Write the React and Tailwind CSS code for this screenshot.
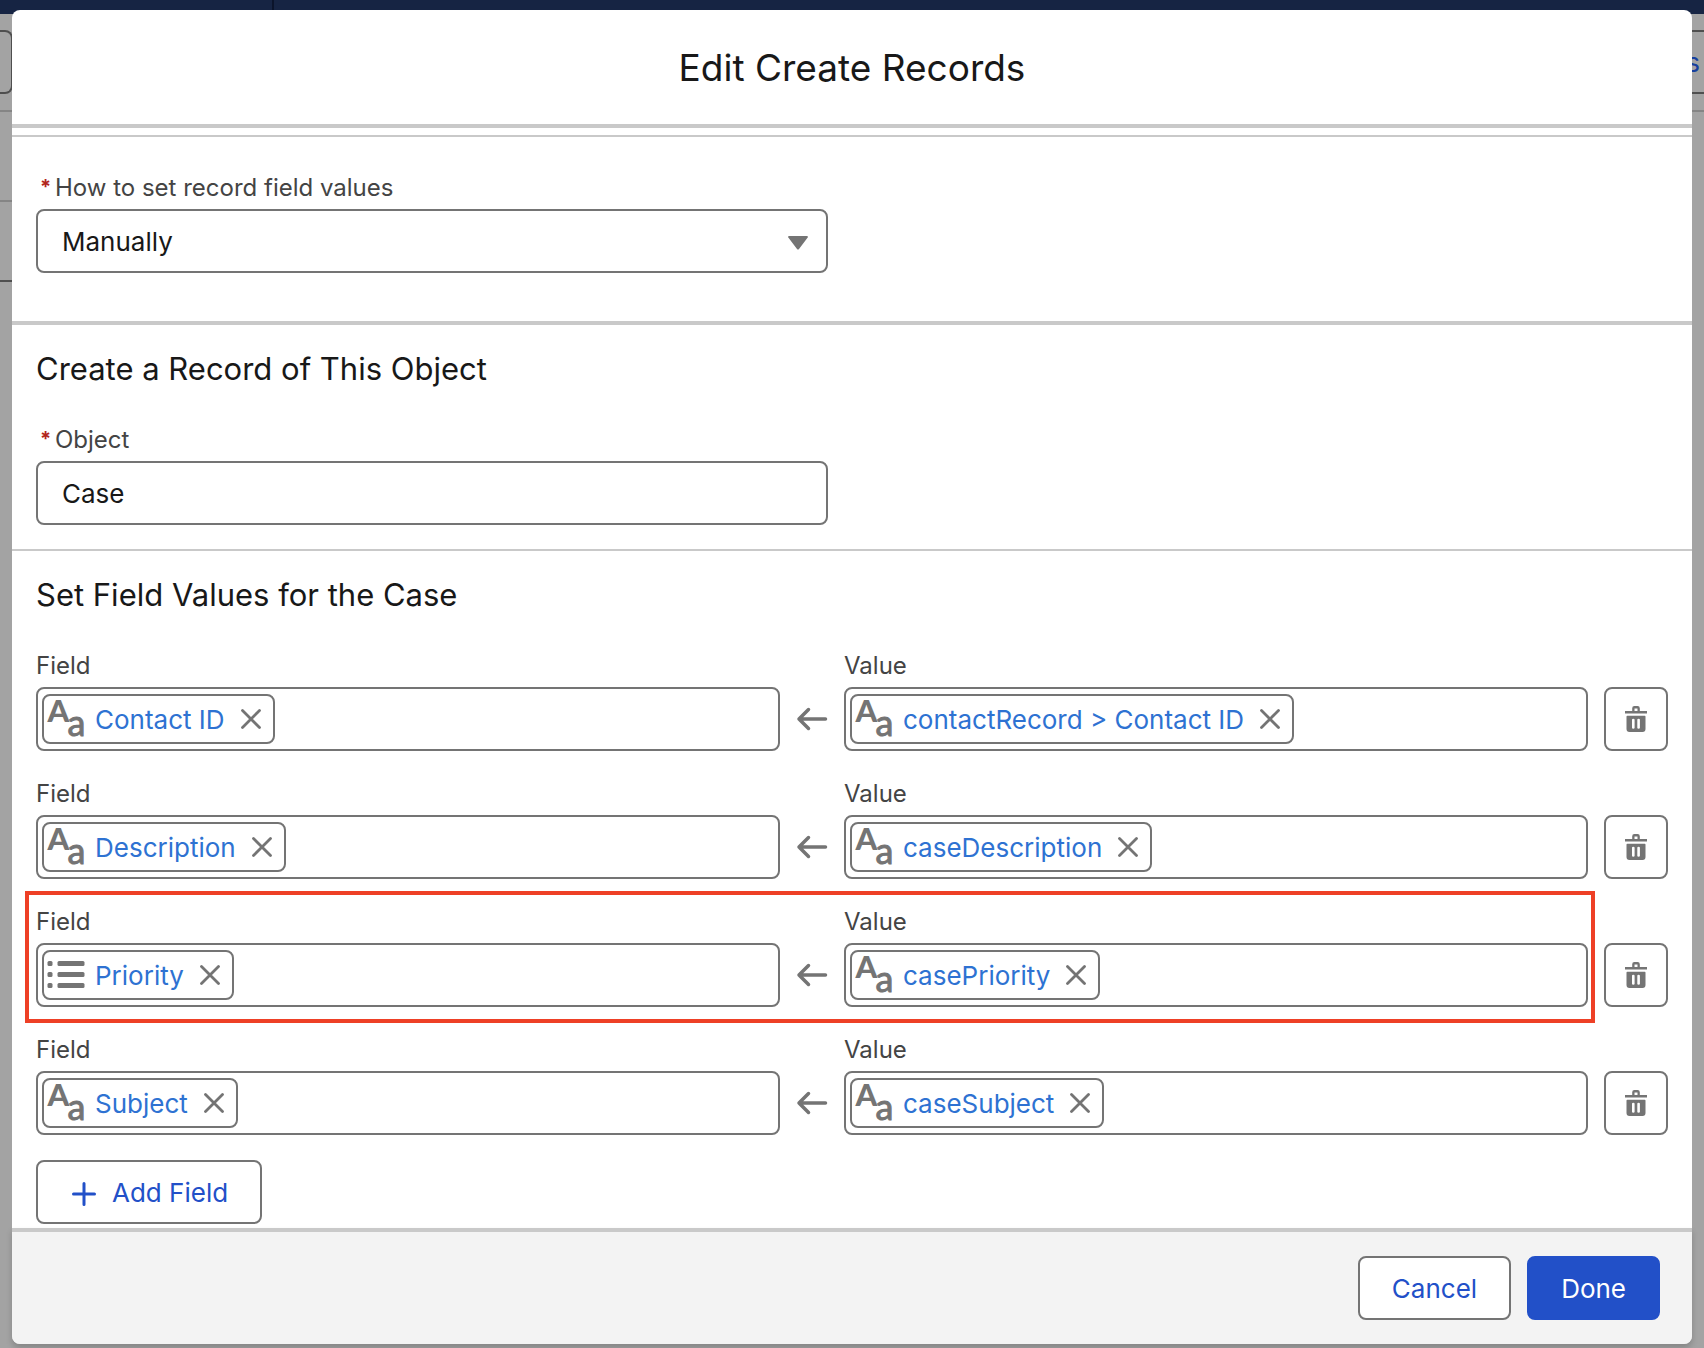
import { useState } from "react";

const ROWS = [
  { id: "contact", field: "Contact ID", type: "text", value: "contactRecord > Contact ID" },
  { id: "description", field: "Description", type: "text", value: "caseDescription" },
  { id: "priority", field: "Priority", type: "picklist", value: "casePriority", highlighted: true },
  { id: "subject", field: "Subject", type: "text", value: "caseSubject" },
];

export default function App() {
  const [rows, setRows] = useState(ROWS);
  const removeRow = (id) => setRows((list) => list.filter((r) => r.id !== id));
  const addRow = () => setRows((list) => [...list, { id: `row-${Date.now()}`, type: "text" }]);

  return (
    <div className="grid min-h-screen bg-[#a3a3a3] overflow-hidden font-[Inter,sans-serif] text-[26px] text-[#181818]">
      <Backdrop />
      <div
        role="dialog"
        aria-labelledby="dialog-title"
        className="relative col-start-1 row-start-1 mx-3 mt-2.5 mb-1 flex flex-col self-start rounded-lg bg-white"
      >
        <header className="border-b-4 border-[#c9c9c9] pt-[33px] pb-[31px] text-center">
          <h1 id="dialog-title" className="text-[37px] leading-[50px]">Edit Create Records</h1>
        </header>

        <main>
          <div className="h-[9px] border-b-2 border-[#c9c9c9]" />

          <section className="grid grid-cols-2 gap-12 border-b-4 border-[#c9c9c9] px-6 pt-8 pb-12">
            <div>
              <Label htmlFor="set-mode" required>How to set record field values</Label>
              <div className="relative">
                <select id="set-mode" className="block h-16 w-full appearance-none rounded-lg border-2 border-[#747474] bg-white px-6">
                  <option>Manually</option>
                </select>
                <svg viewBox="0 0 20 14" className="pointer-events-none absolute top-[27px] right-5 h-3.5 w-5 fill-[#747474]">
                  <path d="M1 0h18q1.500.5.5 1.800L11 13q-1 1.200-2 0L.5 1.800Q-.5.500 1 0z" />
                </svg>
              </div>
            </div>
          </section>

          <section className="border-b-2 border-[#c9c9c9] p-6">
            <Heading>Create a Record of This Object</Heading>
            <div className="grid grid-cols-2 gap-12">
              <div>
                <Label htmlFor="object" required>Object</Label>
                <input id="object" defaultValue="Case" className="block h-16 w-full rounded-lg border-2 border-[#747474] px-6" />
              </div>
            </div>
          </section>

          <section className="px-6 pt-6 pb-1">
            <Heading>Set Field Values for the Case</Heading>
            <div className="flex flex-col gap-6">
              {rows.map((row) => (
                <FieldRow key={row.id} row={row} onRemove={() => removeRow(row.id)} />
              ))}
            </div>
            <button onClick={addRow} className="mt-[25px] flex h-16 items-center gap-4 rounded-lg border-2 border-[#747474] bg-white px-8 text-[#2250c8]">
              <svg viewBox="0 0 26 26" className="mt-1 h-[26px] w-[26px] stroke-[#2250c8]" strokeWidth="3" strokeLinecap="round">
                <path d="M14 2.500v21M3.500 13h21" />
              </svg>
              Add Field
            </button>
          </section>
        </main>

        <footer className="flex justify-end gap-4 rounded-b-lg border-t-4 border-[#c9c9c9] bg-[#f3f3f3] px-8 py-6 shadow-[0_4px_6px_rgba(0,0,0,0.18)]">
          <button className="h-16 rounded-lg border-2 border-[#747474] bg-white px-8 text-[#2250c8]">Cancel</button>
          <button className="h-16 rounded-lg border-2 border-[#2250c8] bg-[#2250c8] px-8 text-white">Done</button>
        </footer>
      </div>
    </div>
  );
}

// Dimmed builder page that shows around the dialog
function Backdrop() {
  return (
    <div className="col-start-1 row-start-1">
      <div className="h-3.5 bg-[#162443]">
        <div className="h-full w-[274px] border-r-2 border-[#0b142b]" />
      </div>
      <div className="flex justify-between border-b-2 border-[#858585] py-4">
        <div className="h-16 w-[13px] rounded-r-lg border-2 border-l-0 border-[#4f4f4f]" />
        <div className="h-16 w-[120px] border-y-2 border-[#4f4f4f] pr-1 text-right leading-[62px] text-[#173f9e]">s</div>
      </div>
      <div className="w-12">
        <div className="h-[90px] border-b-2 border-[#858585]" />
        <div className="h-20 border-b-2 border-[#4f4f4f]" />
      </div>
    </div>
  );
}

function Heading({ children }) {
  return <h2 className="mb-8 text-[31px] leading-10">{children}</h2>;
}

function Label({ htmlFor, required, children }) {
  return (
    <label htmlFor={htmlFor} className="mb-[3px] flex text-2xl leading-[37px] text-[#444444]">
      {required && <span className="mr-[3px] ml-1 w-3 text-xl leading-[37px] font-bold text-[#b3261e]">*</span>}
      {children}
    </label>
  );
}

function FieldRow({ row, onRemove }) {
  return (
    <div className="flex items-end gap-4">
      <div className="relative flex flex-1 items-end gap-4">
        <PillInput id={`${row.id}-field`} label="Field" type={row.type} text={row.field} />
        <svg viewBox="0 0 32 64" className="h-16 w-8 fill-none stroke-[#747474]" strokeWidth="3.5" strokeLinecap="round" strokeLinejoin="round">
          <path d="M3 32H29.500M12.500 22.500L3 32l9.500 9.500" />
        </svg>
        <PillInput id={`${row.id}-value`} label="Value" type="text" text={row.value} />
        {row.highlighted && (
          <div className="pointer-events-none absolute -top-3 -right-[7px] -bottom-4 -left-[11px] border-4 border-[#ee4026]" />
        )}
      </div>
      <button onClick={onRemove} aria-label="Delete row" className="flex h-16 w-16 items-center justify-center rounded-lg border-2 border-[#747474] bg-white">
        <TrashIcon />
      </button>
    </div>
  );
}

function PillInput({ id, label, type, text }) {
  return (
    <div className="min-w-0 flex-1">
      <Label htmlFor={id}>{label}</Label>
      <div className="flex h-16 items-center rounded-lg border-2 border-[#747474] bg-white px-1">
        {text && (
          <span className="flex h-[50px] shrink-0 items-center rounded-lg border-2 border-[#747474] pr-3 pl-[3px]">
            {type === "picklist" ? <PicklistIcon /> : <TextIcon />}
            <a href="#" className="ml-2.5 text-[#2e72d2]">{text}</a>
            <button aria-label={`Remove ${text}`} className="ml-4">
              <svg viewBox="0 0 20 20" className="h-5 w-5 stroke-[#747474]" strokeWidth="2.8" strokeLinecap="round">
                <path d="M1.500 1.500l17 17M18.500 1.500l-17 17" />
              </svg>
            </button>
          </span>
        )}
        <input id={id} className="h-full min-w-0 flex-1 px-2 outline-none" />
      </div>
    </div>
  );
}

function TextIcon() {
  return (
    <svg viewBox="0 0 38 38" className="h-[38px] w-[38px] overflow-visible fill-[#747474] font-[Lato,sans-serif]" aria-hidden="true">
      <text x="0.5" y="22" fontSize="31" fontWeight="900">A</text>
      <text x="20.5" y="35.5" fontSize="36" stroke="#747474" strokeWidth="1">a</text>
    </svg>
  );
}

function PicklistIcon() {
  return (
    <svg viewBox="0 0 38 38" className="h-[38px] w-[38px] fill-[#747474]" aria-hidden="true">
      {[5, 16, 27].map((y) => (
        <g key={y}>
          <rect x="0.5" y={y} width="5" height="5" rx="1.5" />
          <rect x="10.500" y={y} width="27" height="5" rx="1.500" />
        </g>
      ))}
    </svg>
  );
}

function TrashIcon() {
  return (
    <svg viewBox="0 0 22 26" className="h-[26px] w-[22px] fill-[#747474]">
      <path d="M7.200 5V2.200Q7.200 0 9.400 0h3.200q2.200 0 2.200 2.200V5H22v2.500H0V5zM9.500 5h3V2.500h-3z" fillRule="evenodd" />
      <path d="M1.500 10.500q0-.8.8-.8h17.400q.8 0 .8.800V23q0 3-3 3h-13q-3 0-3-3zM7 13.700v8q0 1 1.300 1t1.300-1v-8q0-1-1.300-1t-1.300 1zm5.300 0v8q0 1 1.300 1t1.300-1v-8q0-1-1.300-1t-1.300 1z" fillRule="evenodd" />
    </svg>
  );
}
